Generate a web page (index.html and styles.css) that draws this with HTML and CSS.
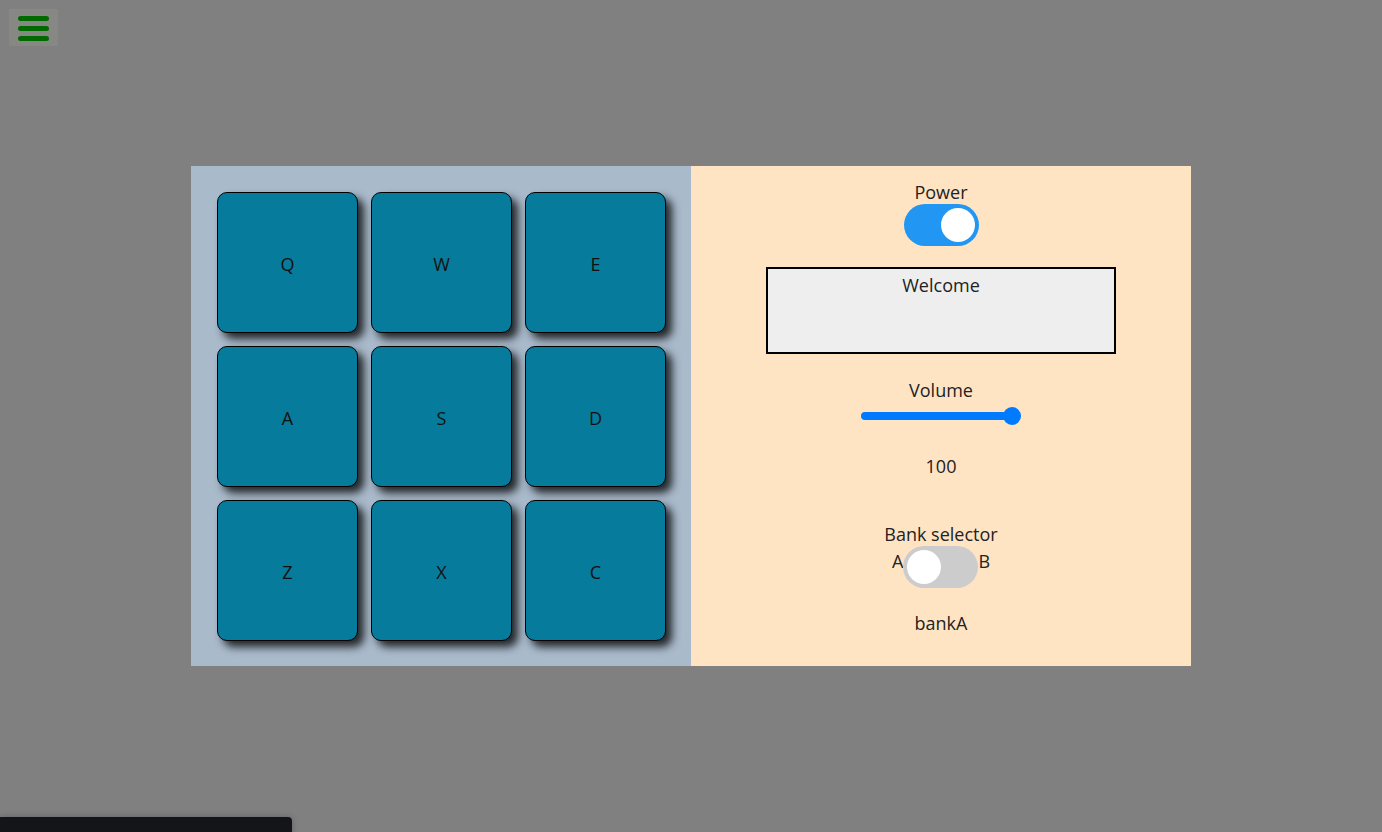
FILE: index.html
```html
<!DOCTYPE html>
<html lang="en">
<head>
<meta charset="utf-8">
<title>Drum Machine</title>
<link rel="stylesheet" href="styles.css">
</head>
<body>
<button class="menu-btn" aria-label="Menu">
  <span class="bar"></span>
  <span class="bar"></span>
  <span class="bar"></span>
</button>

<main id="drum-machine" class="machine">
  <section class="pads">
    <div class="drum-pad">Q</div>
    <div class="drum-pad">W</div>
    <div class="drum-pad">E</div>
    <div class="drum-pad">A</div>
    <div class="drum-pad">S</div>
    <div class="drum-pad">D</div>
    <div class="drum-pad">Z</div>
    <div class="drum-pad">X</div>
    <div class="drum-pad">C</div>
  </section>
  <section class="controls">
    <div class="label">Power</div>
    <div class="switch switch-on"><span class="knob"></span></div>
    <div id="display" class="display">Welcome</div>
    <div class="label volume-label">Volume</div>
    <div class="slider"><span class="track"></span><span class="thumb"></span></div>
    <div class="label value">100</div>
    <div class="label bank-label">Bank selector</div>
    <div class="bank-row">
      <span class="side side-a">A</span>
      <div class="switch switch-off"><span class="knob"></span></div>
      <span class="side side-b">B</span>
    </div>
    <div class="label bank-name">bankA</div>
  </section>
</main>

<div class="footer-bar"></div>
</body>
</html>
```
FILE: styles.css
```css
* { box-sizing: border-box; }

html, body {
  margin: 0;
  padding: 0;
  height: 100%;
}

body {
  background: #808080;
  font-family: "Open Sans", "Noto Sans", sans-serif;
  color: #222;
  display: flex;
  align-items: center;
  justify-content: center;
  min-height: 100vh;
  overflow: hidden;
}

.menu-btn {
  position: fixed;
  top: 9px;
  left: 9px;
  width: 49px;
  height: 37px;
  padding: 7px 0 0 9px;
  border: none;
  background: #878783;
  display: flex;
  flex-direction: column;
  gap: 5px;
  cursor: pointer;
}

.menu-btn .bar {
  display: block;
  width: 31px;
  height: 5px;
  border-radius: 3px;
  background: #006a00;
}

.machine {
  display: flex;
  width: 1000px;
  height: 500px;
}

.pads {
  width: 500px;
  height: 500px;
  background: #a9bacb;
  padding: 26px 0 0 26px;
  display: grid;
  grid-template-columns: repeat(3, 141px);
  grid-template-rows: repeat(3, 141px);
  column-gap: 13px;
  row-gap: 13px;
  align-content: start;
}

.drum-pad {
  background: #077b9b;
  border: 1px solid #000;
  border-radius: 10px;
  box-shadow: 6px 6px 8px rgba(0, 0, 0, 0.8);
  display: flex;
  align-items: center;
  justify-content: center;
  padding-top: 3px;
  font-size: 18px;
  color: #111;
}

.controls {
  width: 500px;
  height: 500px;
  background: #ffe4c4;
  display: flex;
  flex-direction: column;
  align-items: center;
  padding-top: 15px;
}

.label {
  font-size: 18px;
  line-height: 23px;
  text-align: center;
}

.switch {
  position: relative;
  width: 75px;
  height: 42px;
  border-radius: 21px;
  flex-shrink: 0;
}

.switch-on { background: #2196f3; }
.switch-off { background: #cccccc; }

.switch .knob {
  position: absolute;
  top: 4px;
  width: 34px;
  height: 34px;
  border-radius: 50%;
  background: #fff;
}

.switch-on .knob { left: 37px; }
.switch-off .knob { left: 4px; }

.display {
  margin-top: 21px;
  width: 350px;
  height: 87px;
  border: 2px solid #000;
  background: #eeeeee;
  text-align: center;
  font-size: 18px;
  line-height: 23px;
  padding-top: 5px;
}

.volume-label { margin-top: 25px; }

.slider {
  position: relative;
  margin-top: 4px;
  width: 160px;
  height: 20px;
}

.slider .track {
  position: absolute;
  left: 0;
  right: 4px;
  top: 6px;
  height: 8px;
  border-radius: 4px;
  background: #007bff;
}

.slider .thumb {
  position: absolute;
  right: 0;
  top: 1px;
  width: 18px;
  height: 18px;
  border-radius: 50%;
  background: #007bff;
}

.value { margin-top: 29px; }

.bank-label { margin-top: 45px; }

.bank-row {
  display: flex;
  align-items: flex-start;
}

.side {
  font-size: 18px;
  line-height: 23px;
  margin-top: 4px;
}

.bank-name { margin-top: 24px; }

.footer-bar {
  position: fixed;
  left: 0;
  bottom: -10px;
  width: 292px;
  height: 25px;
  background: #141519;
  border-top-right-radius: 4px;
  box-shadow: 0 0 6px rgba(0, 0, 0, 0.25);
}
```
